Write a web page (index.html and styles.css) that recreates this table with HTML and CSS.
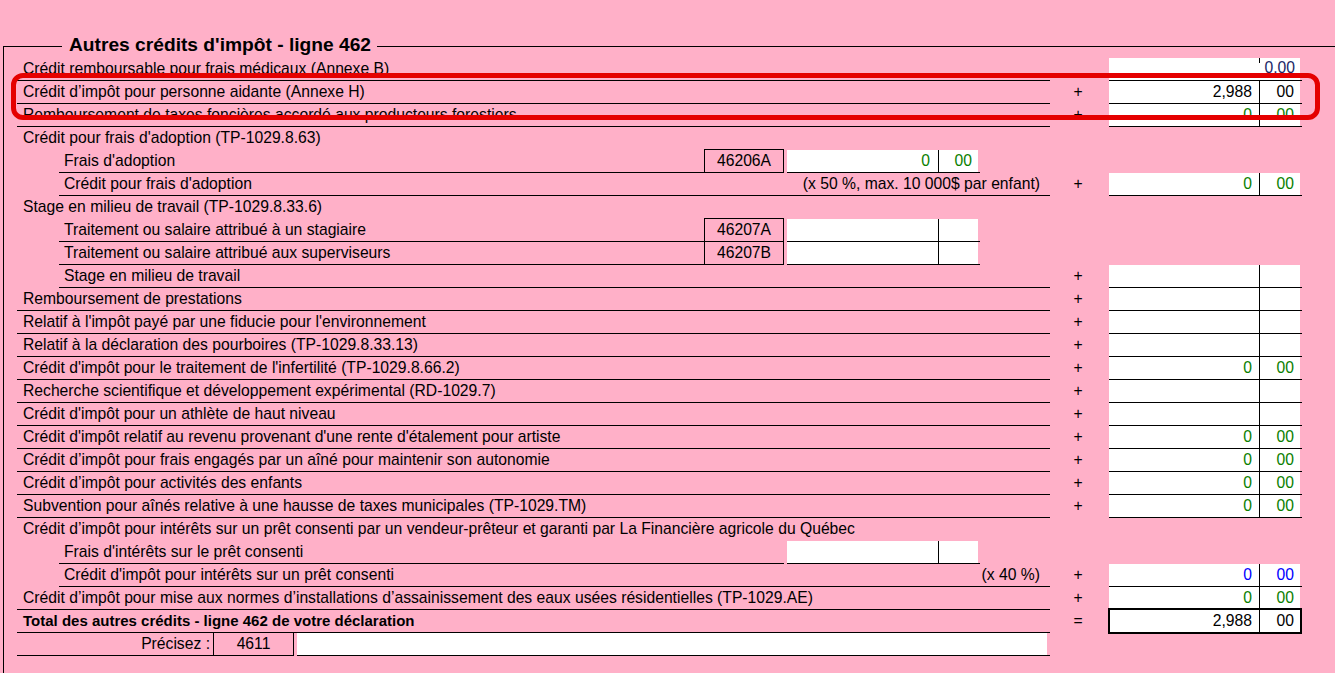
FILE: index.html
```html
<!DOCTYPE html>
<html lang="fr">
<head>
<meta charset="utf-8">
<title>Autres crédits d'impôt - ligne 462</title>
<link rel="stylesheet" href="styles.css">
</head>
<body>
<div class="page">
  <fieldset class="frame">
    <legend>Autres crédits d'impôt - ligne 462</legend>

    <div class="row">
      <div class="lbl">Crédit remboursable pour frais médicaux (Annexe B)</div>
      <div class="op"></div>
      <div class="box"><div class="d"></div><div class="c tick navy">0.00</div></div>
    </div>
    <div class="row">
      <div class="lbl">Crédit d’impôt pour personne aidante (Annexe H)</div>
      <div class="op">+</div>
      <div class="box"><div class="d">2,988</div><div class="c">00</div></div>
    </div>
    <div class="row">
      <div class="lbl">Remboursement de taxes foncières accordé aux producteurs forestiers</div>
      <div class="op">+</div>
      <div class="box green"><div class="d">0</div><div class="c">00</div></div>
    </div>
    <div class="row">
      <div class="lbl head">Crédit pour frais d'adoption (TP-1029.8.63)</div>
    </div>
    <div class="row">
      <div class="lbl ind short">Frais d'adoption</div>
      <div class="code">46206A</div>
      <div class="box sub green"><div class="d">0</div><div class="c">00</div></div>
    </div>
    <div class="row">
      <div class="lbl ind note"><span>Crédit pour frais d'adoption</span><span>(x 50 %, max. 10 000$ par enfant)</span></div>
      <div class="op">+</div>
      <div class="box green"><div class="d">0</div><div class="c">00</div></div>
    </div>
    <div class="row">
      <div class="lbl head">Stage en milieu de travail (TP-1029.8.33.6)</div>
    </div>
    <div class="row">
      <div class="lbl ind short">Traitement ou salaire attribué à un stagiaire</div>
      <div class="code">46207A</div>
      <div class="box sub"><div class="d"></div><div class="c"></div></div>
    </div>
    <div class="row">
      <div class="lbl ind short">Traitement ou salaire attribué aux superviseurs</div>
      <div class="code notop">46207B</div>
      <div class="box sub"><div class="d"></div><div class="c"></div></div>
    </div>
    <div class="row">
      <div class="lbl ind">Stage en milieu de travail</div>
      <div class="op">+</div>
      <div class="box"><div class="d"></div><div class="c"></div></div>
    </div>
    <div class="row">
      <div class="lbl">Remboursement de prestations</div>
      <div class="op">+</div>
      <div class="box"><div class="d"></div><div class="c"></div></div>
    </div>
    <div class="row">
      <div class="lbl">Relatif à l'impôt payé par une fiducie pour l'environnement</div>
      <div class="op">+</div>
      <div class="box"><div class="d"></div><div class="c"></div></div>
    </div>
    <div class="row">
      <div class="lbl">Relatif à la déclaration des pourboires (TP-1029.8.33.13)</div>
      <div class="op">+</div>
      <div class="box"><div class="d"></div><div class="c"></div></div>
    </div>
    <div class="row">
      <div class="lbl">Crédit d'impôt pour le traitement de l'infertilité (TP-1029.8.66.2)</div>
      <div class="op">+</div>
      <div class="box green"><div class="d">0</div><div class="c">00</div></div>
    </div>
    <div class="row">
      <div class="lbl">Recherche scientifique et développement expérimental (RD-1029.7)</div>
      <div class="op">+</div>
      <div class="box"><div class="d"></div><div class="c"></div></div>
    </div>
    <div class="row">
      <div class="lbl">Crédit d'impôt pour un athlète de haut niveau</div>
      <div class="op">+</div>
      <div class="box"><div class="d"></div><div class="c"></div></div>
    </div>
    <div class="row">
      <div class="lbl">Crédit d'impôt relatif au revenu provenant d'une rente d'étalement pour artiste</div>
      <div class="op">+</div>
      <div class="box green"><div class="d">0</div><div class="c">00</div></div>
    </div>
    <div class="row">
      <div class="lbl">Crédit d’impôt pour frais engagés par un aîné pour maintenir son autonomie</div>
      <div class="op">+</div>
      <div class="box green"><div class="d">0</div><div class="c">00</div></div>
    </div>
    <div class="row">
      <div class="lbl">Crédit d’impôt pour activités des enfants</div>
      <div class="op">+</div>
      <div class="box green"><div class="d">0</div><div class="c">00</div></div>
    </div>
    <div class="row">
      <div class="lbl">Subvention pour aînés relative à une hausse de taxes municipales (TP-1029.TM)</div>
      <div class="op">+</div>
      <div class="box green"><div class="d">0</div><div class="c">00</div></div>
    </div>
    <div class="row">
      <div class="lbl head">Crédit d’impôt pour intérêts sur un prêt consenti par un vendeur-prêteur et garanti par La Financière agricole du Québec</div>
    </div>
    <div class="row">
      <div class="lbl ind mid">Frais d'intérêts sur le prêt consenti</div>
      <div class="box sub"><div class="d"></div><div class="c"></div></div>
    </div>
    <div class="row">
      <div class="lbl ind note"><span>Crédit d'impôt pour intérêts sur un prêt consenti</span><span>(x 40 %)</span></div>
      <div class="op">+</div>
      <div class="box blue"><div class="d">0</div><div class="c">00</div></div>
    </div>
    <div class="row">
      <div class="lbl">Crédit d’impôt pour mise aux normes d’installations d’assainissement des eaux usées résidentielles (TP-1029.AE)</div>
      <div class="op">+</div>
      <div class="box green"><div class="d">0</div><div class="c">00</div></div>
    </div>
    <div class="row">
      <div class="lbl bold">Total des autres crédits - ligne 462 de votre déclaration</div>
      <div class="op">=</div>
      <div class="box total"><div class="d">2,988</div><div class="c">00</div></div>
    </div>
    <div class="row">
      <div class="pre">Précisez :</div>
      <div class="pcode">4611</div>
      <div class="pinp"></div>
    </div>
  </fieldset>
  <div class="highlight"></div>
</div>
</body>
</html>
```

FILE: styles.css
```css
html, body {
  margin: 0;
  height: 100%;
  overflow: hidden;
}

body {
  background: #ffb0c8;
  font-family: "Liberation Sans", Arial, sans-serif;
  font-size: 15.7px;
  color: #000;
}

.page {
  position: relative;
  padding-top: 35px;
}

.frame {
  margin: 0 0 0 3px;
  padding: 1px 0 0 13px;
  border: 1px solid #000;
  border-right: 0;
  border-bottom: 0;
  width: 1332px;
  height: 638px;
  box-sizing: border-box;
  min-inline-size: 0;
}

.frame legend {
  margin-left: 45px;
  padding: 0 6px 3px 7px;
  font-weight: bold;
  font-size: 19.2px;
  line-height: 19px;
}

.row {
  display: flex;
  height: 23px;
}

.lbl {
  flex: none;
  box-sizing: border-box;
  width: 1033px;
  height: 23px;
  border-bottom: 1px solid #000;
  padding-left: 6px;
  line-height: 22px;
  white-space: nowrap;
}

.lbl.head {
  border-bottom-color: transparent;
}

.lbl.ind {
  margin-left: 42px;
  width: 991px;
  padding-left: 5px;
}

.lbl.short {
  width: 645px;
}

.lbl.mid {
  width: 725px;
}

.lbl.note {
  display: flex;
  justify-content: space-between;
  padding-right: 10px;
}

.lbl.bold {
  font-weight: bold;
  font-size: 15px;
}

.op {
  flex: none;
  box-sizing: border-box;
  width: 59px;
  padding-right: 3px;
  text-align: center;
  line-height: 22px;
}

.code {
  flex: none;
  box-sizing: border-box;
  width: 80px;
  height: 24px;
  margin-top: -1px;
  border: 1px solid #000;
  text-align: center;
  line-height: 22px;
}

.code.notop {
  border-top: 0;
  height: 23px;
  margin-top: 0;
  line-height: 22px;
}

.box {
  display: flex;
  flex: none;
  height: 23px;
}

.box .d {
  box-sizing: border-box;
  width: 150px;
  height: 23px;
  background: #fff;
  border-bottom: 1px solid #000;
  text-align: right;
  padding-right: 7px;
  line-height: 22px;
}

.box .c {
  box-sizing: border-box;
  width: 43px;
  height: 23px;
  border-left: 1px solid #000;
  border-bottom: 1px solid #000;
  background: linear-gradient(to right, #fff calc(100% - 2px), transparent 0);
  text-align: right;
  padding-right: 8px;
  line-height: 22px;
}

.box .c.tick {
  border-left: 0;
  padding-left: 1px;
  padding-right: 7px;
  line-height: 19px;
  background:
    linear-gradient(#000, #000) 0 0 / 1px 5px no-repeat,
    linear-gradient(to right, #fff calc(100% - 2px), transparent 0);
}

.navy {
  color: #1a2766;
}

.green {
  color: #0a8000;
}

.blue {
  color: #0000ff;
}

.box.sub {
  margin-left: 3px;
}

.box.sub .d {
  width: 151px;
  padding-right: 8px;
}

.box.sub .c {
  width: 42px;
  padding-right: 8px;
}

.box.total {
  box-sizing: border-box;
  width: 194px;
  height: 26px;
  margin: -2px 0 0 -1px;
  border: 2px solid #000;
  background: #fff;
}

.box.total .d {
  width: 149px;
  height: 22px;
  border: 0;
}

.box.total .c {
  width: 41px;
  height: 22px;
  border-bottom: 0;
  background: #fff;
  padding-right: 6px;
}

.pre {
  flex: none;
  box-sizing: border-box;
  width: 197px;
  height: 23px;
  border-right: 1px solid #000;
  border-bottom: 1px solid #000;
  padding-right: 3px;
  text-align: right;
  line-height: 22px;
}

.pcode {
  flex: none;
  box-sizing: border-box;
  width: 80px;
  height: 23px;
  border-right: 1px solid #000;
  border-bottom: 1px solid #000;
  text-align: center;
  line-height: 22px;
}

.pinp {
  flex: none;
  box-sizing: border-box;
  width: 753px;
  height: 23px;
  margin-left: 3px;
  border-bottom: 1px solid #000;
  background: linear-gradient(to right, #fff calc(100% - 3px), transparent 0);
}

.highlight {
  position: absolute;
  left: 11px;
  top: 73px;
  width: 1309px;
  height: 47px;
  box-sizing: border-box;
  border: 5px solid #e50000;
  border-radius: 12px;
}
```
